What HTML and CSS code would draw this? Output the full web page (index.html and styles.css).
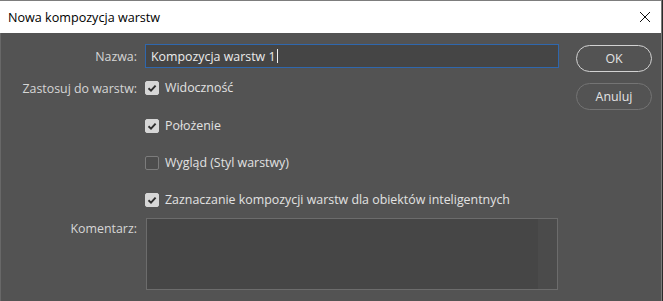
FILE: index.html
```html
<!DOCTYPE html>
<html lang="pl">
  <head>
    <meta charset="UTF-8" />
    <title>Nowa kompozycja warstw</title>
    <link rel="stylesheet" href="styles.css">
  </head>
  <body>
    <div class="window">
      <!-- pasek tytułu -->
      <div class="titlebar">
        <span class="title">Nowa kompozycja warstw</span>
        <svg class="close" width="12" height="12" viewBox="0 0 12 12">
          <path d="M1 1L11 11M11 1L1 11" />
        </svg>
      </div>

      <!-- treść okna -->
      <div class="dialog">
        <div class="form">
          <div class="label">Nazwa:</div>
          <div class="name-field">
            <span>Kompozycja warstw 1</span><span class="caret"></span>
          </div>

          <div class="label">Zastosuj do warstw:</div>
          <div class="check">
            <span class="box checked">
              <svg width="14" height="14" viewBox="0 0 14 14"><path d="M3.5 7.2L6 9.6L10.6 4.6" /></svg>
            </span>
            Widoczność
          </div>

          <div></div>
          <div class="check">
            <span class="box checked">
              <svg width="14" height="14" viewBox="0 0 14 14"><path d="M3.5 7.2L6 9.6L10.6 4.6" /></svg>
            </span>
            Położenie
          </div>

          <div></div>
          <div class="check">
            <span class="box"></span>
            Wygląd (Styl warstwy)
          </div>

          <div></div>
          <div class="check">
            <span class="box checked">
              <svg width="14" height="14" viewBox="0 0 14 14"><path d="M3.5 7.2L6 9.6L10.6 4.6" /></svg>
            </span>
            Zaznaczanie kompozycji warstw dla obiektów inteligentnych
          </div>

          <div class="label top">Komentarz:</div>
          <div class="comment"><div class="scroll"></div></div>
        </div>

        <div class="buttons">
          <button class="btn primary">OK</button>
          <button class="btn">Anuluj</button>
        </div>
      </div>
    </div>
  </body>
</html>
```

FILE: styles.css
```css
html,
body {
  margin: 0;
  padding: 0;
  background: #2b2b2b;
}
body {
  font-family: "Open Sans", "Noto Sans", sans-serif;
  font-size: 12.4px;
}
.window {
  width: 661px;
  height: 300px;
  border-top: 1px solid #7d7d7d;
  border-right: 1px solid #7a7a7a;
  display: flex;
  flex-direction: column;
}
.titlebar {
  height: 32px;
  background: #fff;
  display: flex;
  align-items: center;
  justify-content: space-between;
  padding: 0 10px 0 8px;
}
.title {
  color: #000;
  font-size: 12.6px;
}
.close path {
  stroke: #111;
  stroke-width: 1;
  fill: none;
}
.dialog {
  flex: 1;
  background: #535353;
  border-left: 1px solid #686868;
  display: flex;
  align-items: flex-start;
  padding-top: 11px;
}
.form {
  display: grid;
  grid-template-columns: 136px 414px;
  grid-template-rows: 24px 39px 37px 37px 37px 72px;
  column-gap: 8px;
}
.label {
  color: #d6d6d6;
  text-align: right;
  display: flex;
  align-items: center;
  justify-content: flex-end;
  white-space: nowrap;
}
.form > .label:nth-child(3) {
  padding-top: 1px;
}
.label.top {
  align-items: flex-start;
  padding-top: 2px;
}
.name-field {
  background: #454545;
  border: 1px solid #2f67ad;
  box-sizing: border-box;
  color: #ececec;
  display: flex;
  align-items: center;
  padding-left: 5px;
}
.caret {
  width: 1px;
  height: 14px;
  background: #f0f0f0;
  margin-left: 1px;
}
.check {
  color: #e2e2e2;
  display: flex;
  align-items: center;
  gap: 6px;
  padding-top: 0;
  white-space: nowrap;
}
.box {
  width: 14px;
  height: 14px;
  box-sizing: border-box;
  border-radius: 2px;
  border: 1px solid #7c7c7c;
  background: #4d4d4d;
  display: flex;
  flex-shrink: 0;
}
.box.checked {
  background: #d6d6d6;
  border-color: #d6d6d6;
}
.box svg {
  margin: -1px;
}
.box path {
  stroke: #2e2e2e;
  stroke-width: 1.9;
  fill: none;
}
.comment {
  margin-left: 1px;
  width: 412px;
  height: 72px;
  box-sizing: border-box;
  border: 1px solid #6c6c6c;
  background: #464646;
  display: flex;
  justify-content: flex-end;
}
.scroll {
  width: 19px;
  background: #4b4b4b;
}
.buttons {
  display: flex;
  flex-direction: column;
  gap: 11px;
  margin-left: 17px;
  padding-top: 1px;
}
.btn {
  width: 76px;
  height: 27px;
  border-radius: 14px;
  background: #535353;
  border: 1px solid #747474;
  color: #e4e4e4;
  font-family: inherit;
  font-size: 12.4px;
  padding: 0;
}
.btn.primary {
  border: 1.5px solid #d2d2d2;
}
```
